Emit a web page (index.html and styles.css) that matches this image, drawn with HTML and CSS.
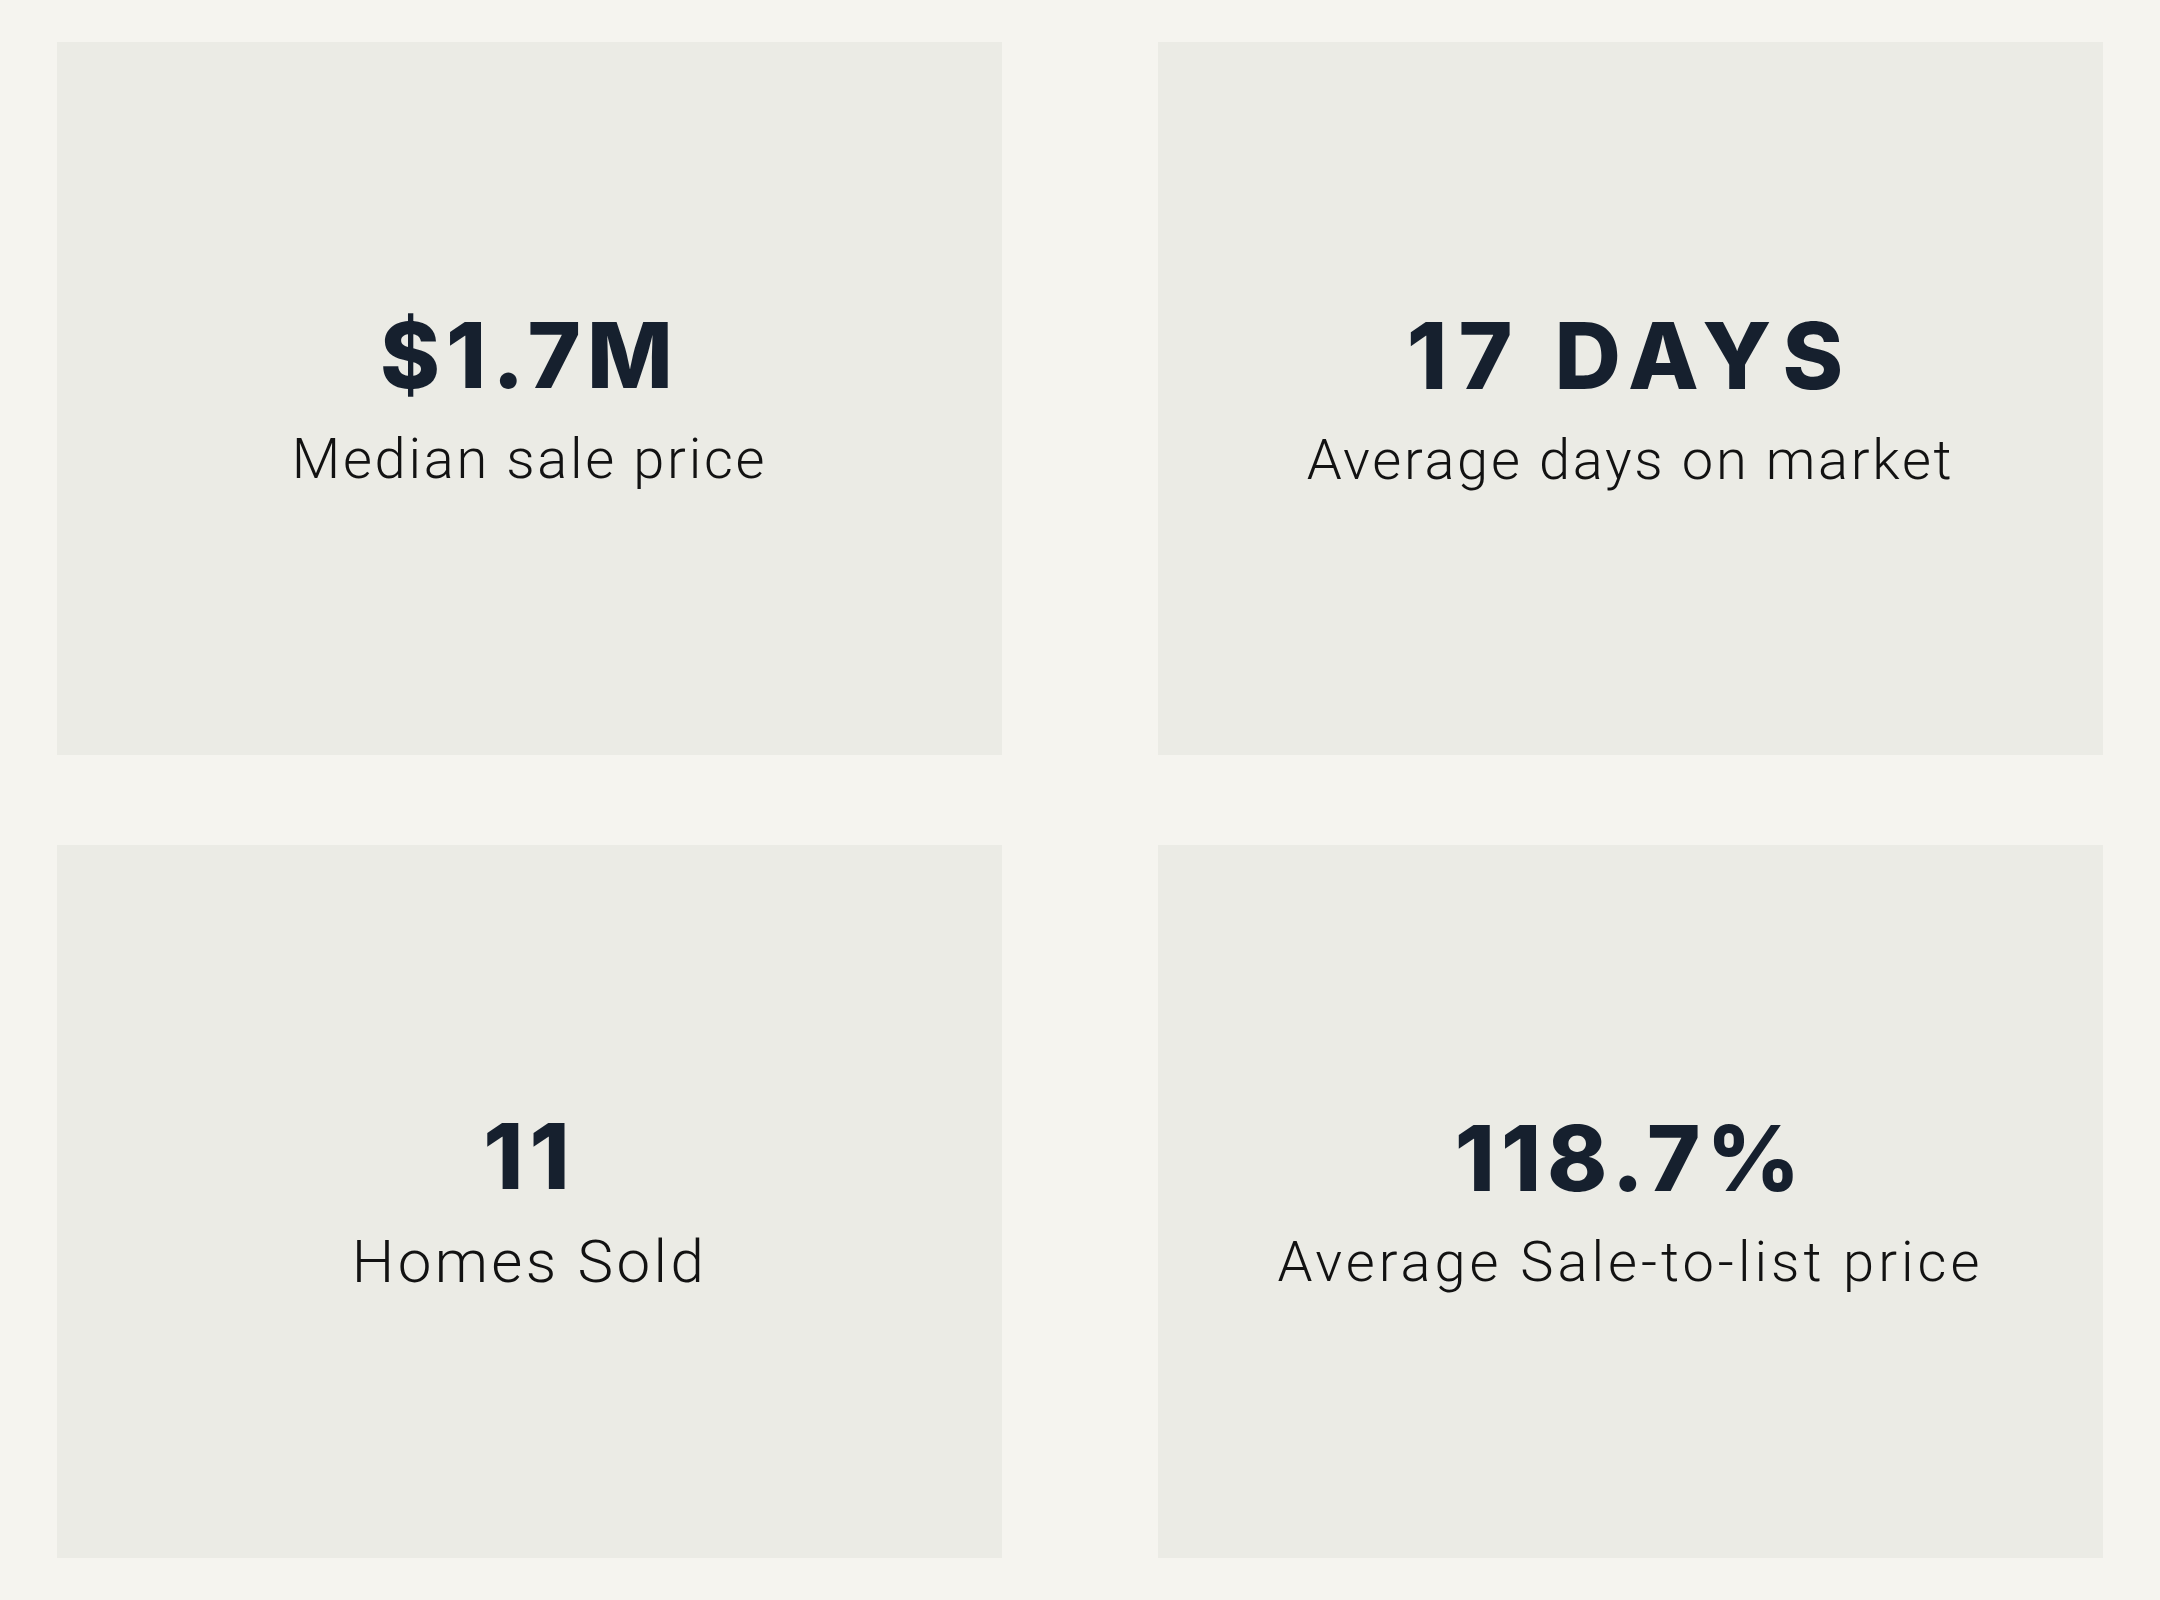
FILE: index.html
```html
<!DOCTYPE html>
<html lang="en">
<head>
<meta charset="utf-8">
<title>Market stats</title>
<link rel="stylesheet" href="styles.css">
</head>
<body>
<main class="stats">
  <section class="card">
    <div class="value">$1.7M</div>
    <div class="label label--tight">Median sale price</div>
  </section>
  <section class="card">
    <div class="value value--wide">17 DAYS</div>
    <div class="label label--tight">Average days on market</div>
  </section>
  <section class="card">
    <div class="value">11</div>
    <div class="label label--large">Homes Sold</div>
  </section>
  <section class="card">
    <div class="value">118.7%</div>
    <div class="label">Average Sale-to-list price</div>
  </section>
</main>
</body>
</html>
```
FILE: styles.css
```css
html, body {
  margin: 0;
  padding: 0;
  background: #f5f4ef;
}

.stats {
  display: grid;
  grid-template-columns: 945px 945px;
  grid-auto-rows: 713px;
  column-gap: 156px;
  row-gap: 90px;
  padding: 42px 57px;
}

.card {
  background: #ebebe5;
  display: flex;
  flex-direction: column;
  align-items: center;
  justify-content: center;
  text-align: center;
}

.value {
  font-family: "Inter", "DejaVu Sans", sans-serif;
  font-weight: 800;
  font-size: 91px;
  line-height: 1;
  letter-spacing: 6px;
  color: #16202e;
}

.value--wide {
  font-size: 92px;
  letter-spacing: 11px;
}

.label {
  font-family: "Roboto", "Liberation Sans", sans-serif;
  font-weight: 300;
  font-size: 56px;
  line-height: 1;
  letter-spacing: 4px;
  color: #121212;
  margin-top: 30px;
}

.label--tight {
  letter-spacing: 2.7px;
}

.label--large {
  font-size: 60px;
  letter-spacing: 3.4px;
}
```
